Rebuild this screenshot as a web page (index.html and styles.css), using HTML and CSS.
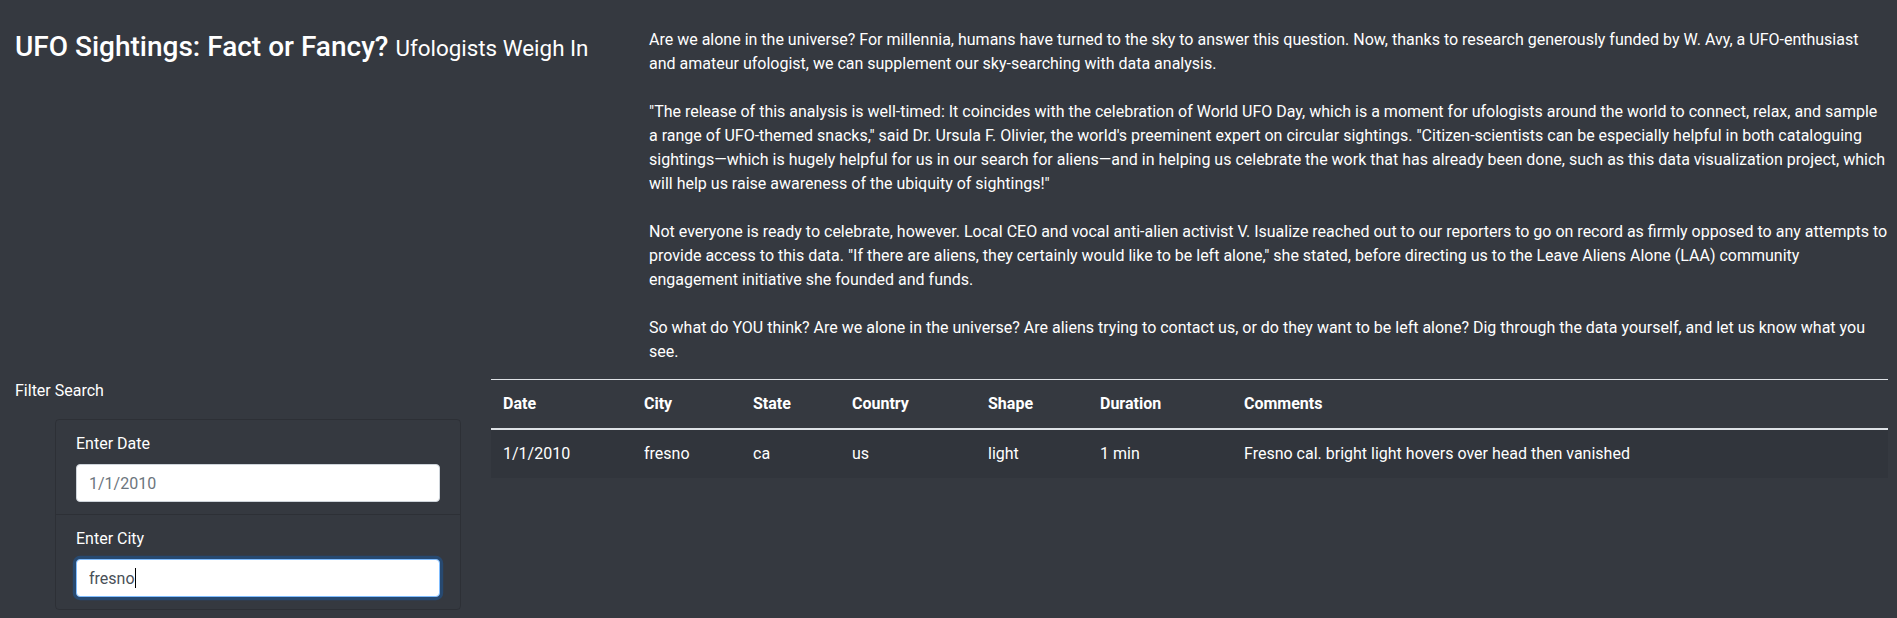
FILE: index.html
```html
<!DOCTYPE html>
<html lang="en">
<head>
<meta charset="utf-8">
<title>UFO Sightings: Fact or Fancy?</title>
<link rel="stylesheet" href="styles.css">
</head>
<body>
<div class="page">
  <header class="top">
    <div class="title-col">
      <h1 class="title">UFO Sightings: Fact or Fancy? <small>Ufologists Weigh In</small></h1>
    </div>
    <div class="intro-col">
      <p>Are we alone in the universe? For millennia, humans have turned to the sky to answer this question. Now, thanks to research generously funded by W. Avy, a UFO-enthusiast and amateur ufologist, we can supplement our sky-searching with data analysis.</p>
      <p>"The release of this analysis is well-timed: It coincides with the celebration of World UFO Day, which is a moment for ufologists around the world to connect, relax, and sample a range of UFO-themed snacks," said Dr. Ursula F. Olivier, the world's preeminent expert on circular sightings. "Citizen-scientists can be especially helpful in both cataloguing sightings—which is hugely helpful for us in our search for aliens—and in helping us celebrate the work that has already been done, such as this data visualization project, which will help us raise awareness of the ubiquity of sightings!"</p>
      <p>Not everyone is ready to celebrate, however. Local CEO and vocal anti-alien activist V. Isualize reached out to our reporters to go on record as firmly opposed to any attempts to provide access to this data. "If there are aliens, they certainly would like to be left alone," she stated, before directing us to the Leave Aliens Alone (LAA) community engagement initiative she founded and funds.</p>
      <p>So what do YOU think? Are we alone in the universe? Are aliens trying to contact us, or do they want to be left alone? Dig through the data yourself, and let us know what you see.</p>
    </div>
  </header>
  <main class="main">
    <aside class="sidebar">
      <p class="filter-title">Filter Search</p>
      <form class="filters">
        <ul class="list-group">
          <li class="list-group-item">
            <label for="datetime">Enter Date</label>
            <input class="form-control" id="datetime" type="text" placeholder="1/1/2010">
          </li>
          <li class="list-group-item">
            <label for="city">Enter City</label>
            <div class="input-wrap">
              <input class="form-control is-focused" id="city" type="text" value="fresno">
              <span class="caret-mark" aria-hidden="true"><span class="caret-text">fresno</span><span class="caret-bar"></span></span>
            </div>
          </li>
        </ul>
      </form>
    </aside>
    <section class="results">
      <table class="table">
        <colgroup>
          <col class="c-date">
          <col class="c-city">
          <col class="c-state">
          <col class="c-country">
          <col class="c-shape">
          <col class="c-duration">
          <col class="c-comments">
        </colgroup>
        <thead>
          <tr>
            <th>Date</th>
            <th>City</th>
            <th>State</th>
            <th>Country</th>
            <th>Shape</th>
            <th>Duration</th>
            <th>Comments</th>
          </tr>
        </thead>
        <tbody>
          <tr>
            <td>1/1/2010</td>
            <td>fresno</td>
            <td>ca</td>
            <td>us</td>
            <td>light</td>
            <td>1 min</td>
            <td>Fresno cal. bright light hovers over head then vanished</td>
          </tr>
        </tbody>
      </table>
    </section>
  </main>
</div>
</body>
</html>
```
FILE: styles.css
```css
html, body {
  margin: 0;
  padding: 0;
}

body {
  background: #353940;
  color: #ffffff;
  font-family: Roboto, "Liberation Sans", sans-serif;
  font-size: 16px;
  line-height: 1.5;
  overflow: hidden;
}

*, *::before, *::after {
  box-sizing: border-box;
}

.top {
  display: grid;
  grid-template-columns: 634px 1fr;
  padding: 28px 9px 0 0;
}

.title-col {
  padding: 0 15px;
}

.title {
  margin: 2px 0 0;
  font-size: 28px;
  font-weight: 500;
  line-height: 1.2;
}

.title small {
  font-size: 80%;
  font-weight: 400;
}

.intro-col {
  padding-left: 15px;
}

.intro-col p {
  margin: 0 0 24px;
}

.intro-col p:last-child {
  margin-bottom: 15px;
}

.main {
  display: grid;
  grid-template-columns: 476px 1fr;
  padding-right: 9px;
  align-items: start;
}

.sidebar {
  padding: 0 15px;
}

.filter-title {
  margin: 0 0 16px;
}

.filters {
  margin: 0;
}

.list-group {
  list-style: none;
  margin: 0 0 0 40px;
  padding: 0;
  border: 1px solid rgba(0, 0, 0, 0.15);
  border-radius: 4px;
}

.list-group-item {
  padding: 12px 20px;
  border-bottom: 1px solid rgba(0, 0, 0, 0.15);
}

.list-group-item:last-child {
  border-bottom: 0;
}

.list-group-item label {
  display: block;
  margin-bottom: 8px;
}

.form-control {
  display: block;
  width: 100%;
  height: 38px;
  padding: 6px 12px;
  font-family: inherit;
  font-size: 16px;
  line-height: 1.5;
  color: #495057;
  background: #ffffff;
  border: 1px solid #ced4da;
  border-radius: 4px;
  outline: none;
}

.form-control::placeholder {
  color: #6c757d;
  opacity: 1;
}

.form-control.is-focused,
.form-control:focus {
  border-color: #80bdff;
  box-shadow: 0 0 0 3.2px rgba(0, 123, 255, 0.25);
}

.input-wrap {
  position: relative;
}

.caret-mark {
  position: absolute;
  left: 13px;
  top: 7px;
  height: 24px;
  display: flex;
  align-items: center;
  pointer-events: none;
}

.caret-text {
  visibility: hidden;
  font-size: 16px;
  line-height: 24px;
}

.caret-bar {
  display: block;
  width: 1px;
  height: 20px;
  background: #000000;
}

.results {
  padding-left: 15px;
}

.table {
  width: 100%;
  border-collapse: collapse;
  table-layout: fixed;
  color: #ffffff;
}

.c-date { width: 141px; }
.c-city { width: 109px; }
.c-state { width: 99px; }
.c-country { width: 136px; }
.c-shape { width: 112px; }
.c-duration { width: 144px; }

.table th,
.table td {
  padding: 12px;
  text-align: left;
  vertical-align: top;
  border-top: 1px solid #dee2e6;
}

.table th {
  font-weight: 700;
  border-bottom: 2px solid #dee2e6;
}

.table tbody td {
  border-top: 0;
}

.table tbody tr:nth-child(odd) {
  background: rgba(0, 0, 0, 0.06);
}
```
